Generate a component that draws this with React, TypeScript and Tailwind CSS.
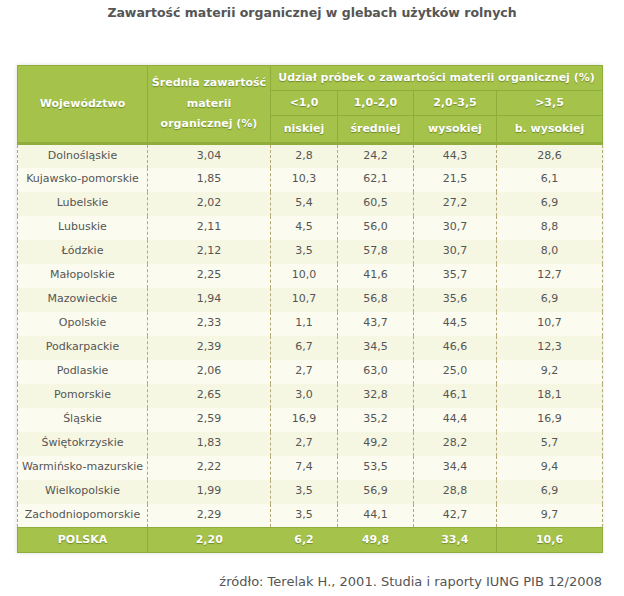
const rows: [string, string, string, string, string, string][] = [
  ['Dolnośląskie', '3,04', '2,8', '24,2', '44,3', '28,6'],
  ['Kujawsko-pomorskie', '1,85', '10,3', '62,1', '21,5', '6,1'],
  ['Lubelskie', '2,02', '5,4', '60,5', '27,2', '6,9'],
  ['Lubuskie', '2,11', '4,5', '56,0', '30,7', '8,8'],
  ['Łódzkie', '2,12', '3,5', '57,8', '30,7', '8,0'],
  ['Małopolskie', '2,25', '10,0', '41,6', '35,7', '12,7'],
  ['Mazowieckie', '1,94', '10,7', '56,8', '35,6', '6,9'],
  ['Opolskie', '2,33', '1,1', '43,7', '44,5', '10,7'],
  ['Podkarpackie', '2,39', '6,7', '34,5', '46,6', '12,3'],
  ['Podlaskie', '2,06', '2,7', '63,0', '25,0', '9,2'],
  ['Pomorskie', '2,65', '3,0', '32,8', '46,1', '18,1'],
  ['Śląskie', '2,59', '16,9', '35,2', '44,4', '16,9'],
  ['Świętokrzyskie', '1,83', '2,7', '49,2', '28,2', '5,7'],
  ['Warmińsko-mazurskie', '2,22', '7,4', '53,5', '34,4', '9,4'],
  ['Wielkopolskie', '1,99', '3,5', '56,9', '28,8', '6,9'],
  ['Zachodniopomorskie', '2,29', '3,5', '44,1', '42,7', '9,7'],
];

const th =
  'border border-[#8fad3b] font-bold text-white text-[11px] [text-shadow:0_1px_1px_#6f8a2a] p-0';

export default function App() {
  return (
    <div className="w-[624px] h-[596px] bg-white font-['DejaVu_Sans',Verdana,sans-serif] text-[#555]">
      <h1 className="pt-[5px] text-center text-[12.5px] font-bold leading-[16px] text-[#555]">
        Zawartość materii organicznej w glebach użytków rolnych
      </h1>

      <div className="ml-[17px] mt-[44px] w-[585px] shadow-[0_0_4px_rgba(0,0,0,0.15)]">
        <table className="w-[585px] table-fixed border-collapse text-center">
          <colgroup>
            <col className="w-[130px]" />
            <col className="w-[123px]" />
            <col className="w-[67px]" />
            <col className="w-[76px]" />
            <col className="w-[83px]" />
            <col className="w-[106px]" />
          </colgroup>
          <thead className="bg-[#a5c24b]">
            <tr className="h-[25px]">
              <th rowSpan={3} className={th}>
                Województwo
              </th>
              <th rowSpan={3} className={`${th} leading-[20.5px]`}>
                Średnia zawartość
                <br />
                materii
                <br />
                organicznej (%)
              </th>
              <th colSpan={4} className={th}>
                Udział próbek o zawartości materii organicznej (%)
              </th>
            </tr>
            <tr className="h-[25px]">
              <th className={th}>&lt;1,0</th>
              <th className={th}>1,0-2,0</th>
              <th className={th}>2,0-3,5</th>
              <th className={th}>&gt;3,5</th>
            </tr>
            <tr className="h-[28px] border-b-[3px] border-b-[#8fad3b]">
              <th className={`${th} border-b-[3px]`}>niskiej</th>
              <th className={`${th} border-b-[3px]`}>średniej</th>
              <th className={`${th} border-b-[3px]`}>wysokiej</th>
              <th className={`${th} border-b-[3px]`}>b. wysokiej</th>
            </tr>
          </thead>
          <tbody className="text-[11px]">
            {rows.map((r, i) => (
              <tr key={r[0]} className={`h-[24px] ${i % 2 === 0 ? 'bg-[#f5f7e3]' : 'bg-[#fbfcef]'}`}>
                {r.map((c, j) => (
                  <td
                    key={j}
                    className="border-x border-dashed border-[#b3a877] p-0 whitespace-nowrap"
                  >
                    {c}
                  </td>
                ))}
              </tr>
            ))}
            <tr className="h-[25px] bg-[#a5c24b] font-bold text-white [text-shadow:0_1px_1px_#6f8a2a]">
              <td className="border border-[#8fad3b] p-0">POLSKA</td>
              <td className="border-y border-[#8fad3b] p-0">2,20</td>
              <td className="border-y border-[#8fad3b] p-0">6,2</td>
              <td className="border-y border-[#8fad3b] p-0">49,8</td>
              <td className="border-y border-[#8fad3b] p-0">33,4</td>
              <td className="border border-[#8fad3b] p-0">10,6</td>
            </tr>
          </tbody>
        </table>
      </div>

      <p className="mt-[21px] mr-[22px] text-right text-[13px] leading-[16px] text-[#555]">
        źródło: Terelak H., 2001. Studia i raporty IUNG PIB 12/2008
      </p>
    </div>
  );
}
